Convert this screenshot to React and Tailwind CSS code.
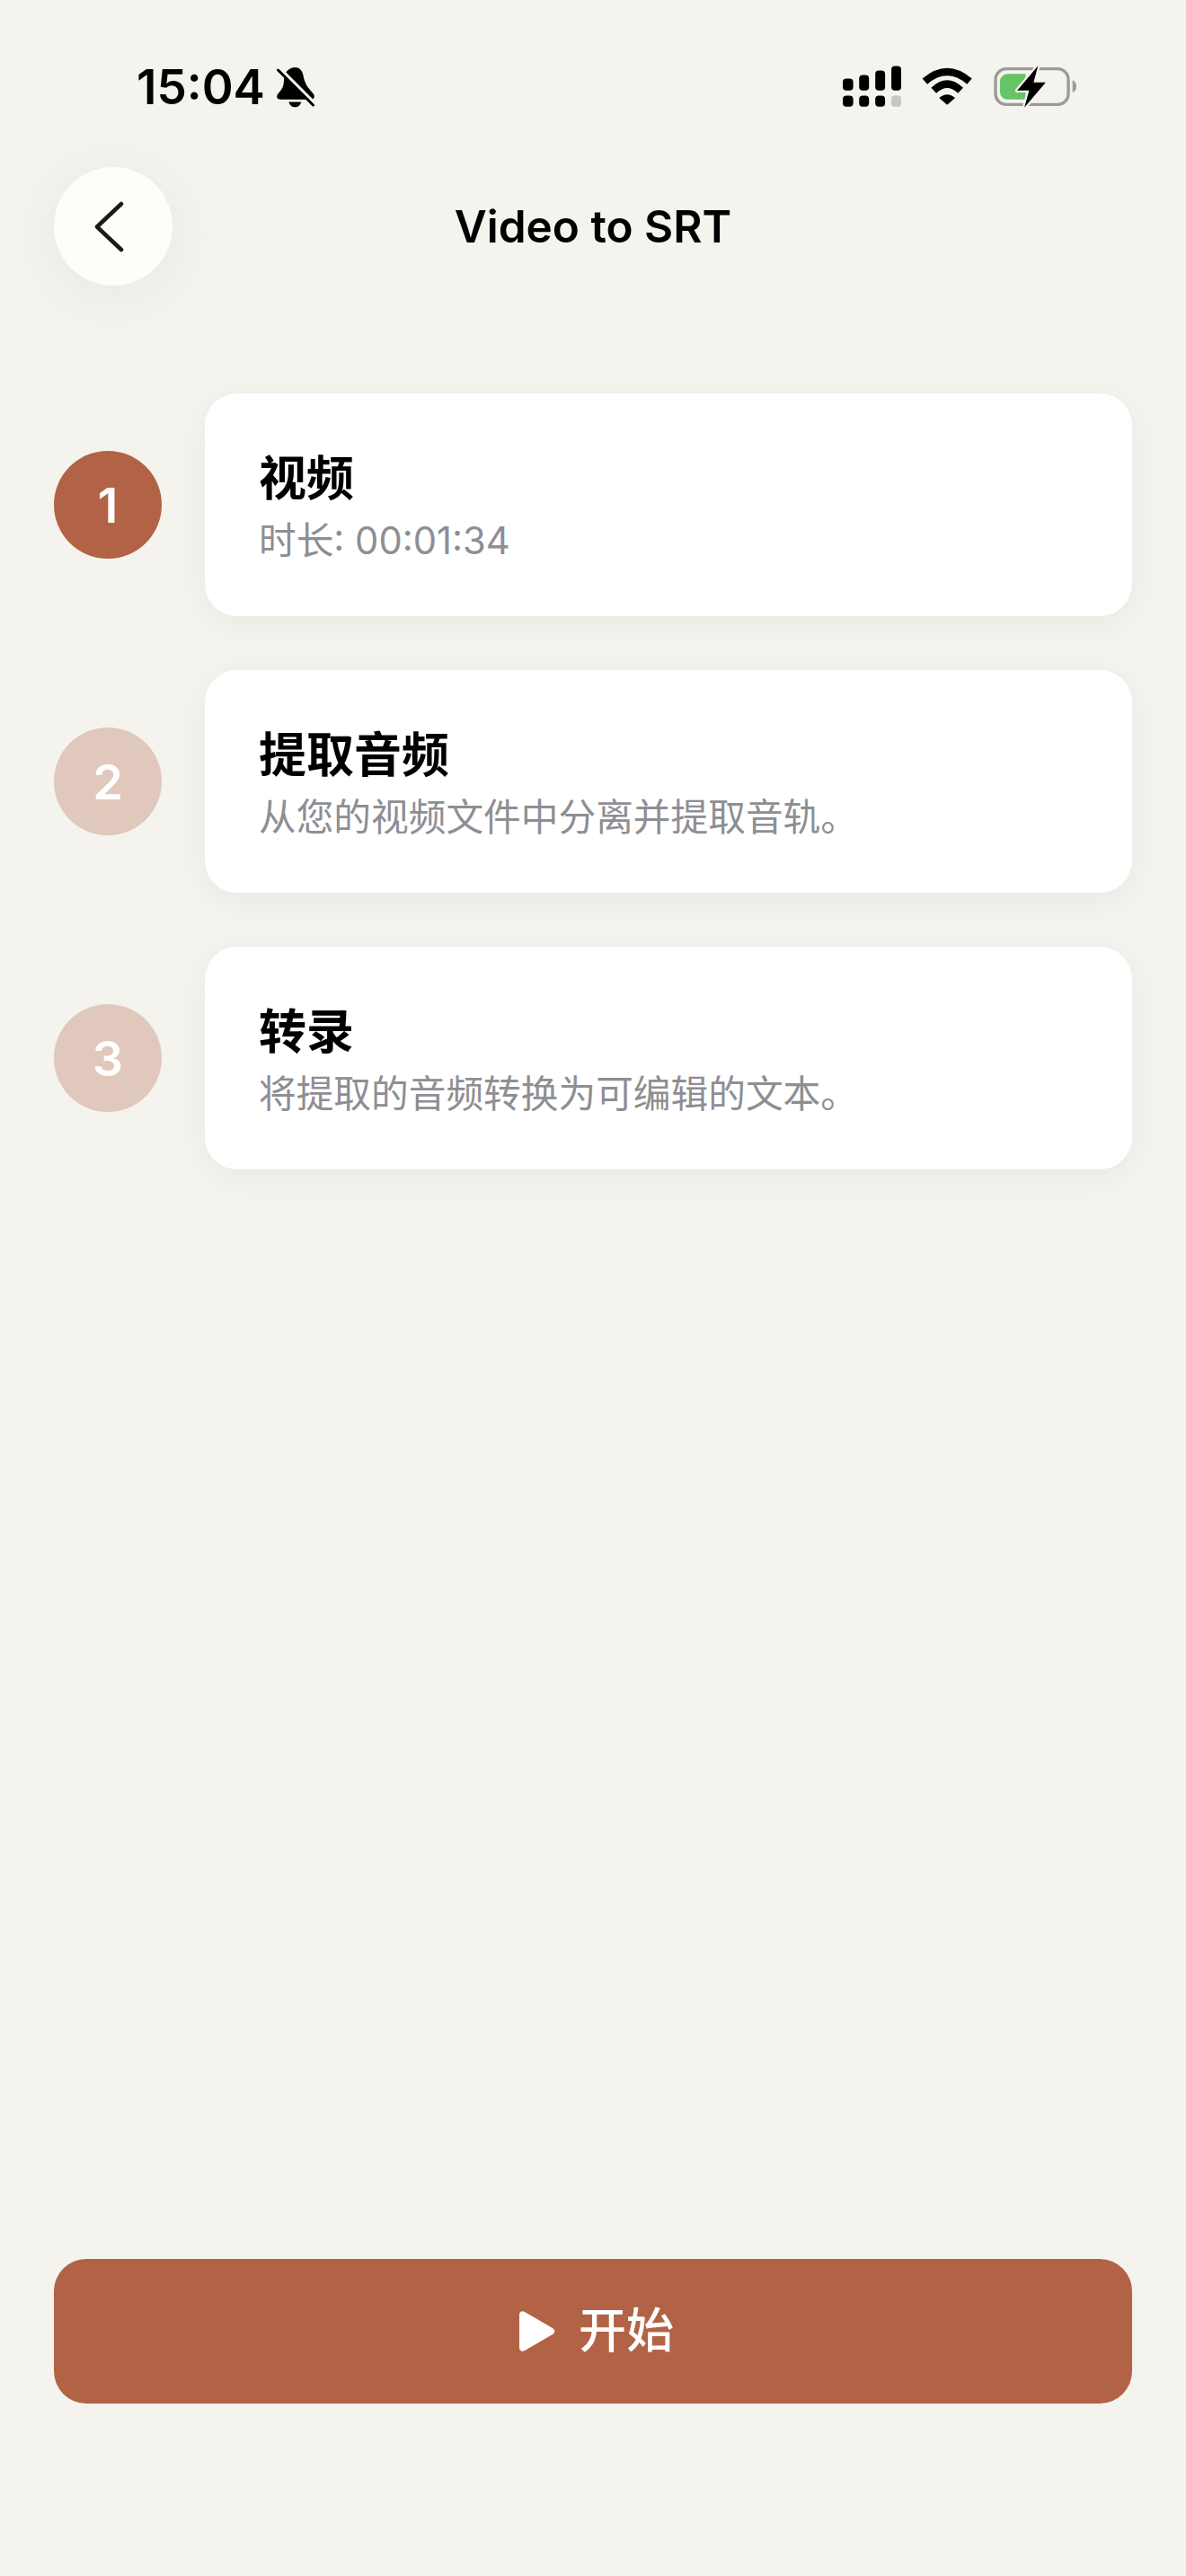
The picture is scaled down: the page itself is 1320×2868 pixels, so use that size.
const cjk = "font-['Inter','Noto_Sans_CJK_SC',sans-serif]";

const steps = [
  { n: 1, title: "视频", desc: "时长: 00:01:34", active: true },
  { n: 2, title: "提取音频", desc: "从您的视频文件中分离并提取音轨。" },
  { n: 3, title: "转录", desc: "将提取的音频转换为可编辑的文本。" },
];

const SignalIcon = () => (
  <svg width="65" height="47" viewBox="110 70 196 140">
    <rect x="110" y="113" width="35" height="40" rx="12" fill="#000" />
    <rect x="165" y="101" width="33" height="52" rx="12" fill="#000" />
    <rect x="219" y="86" width="33" height="67" rx="12" fill="#000" />
    <rect x="273" y="71" width="33" height="82" rx="12" fill="#000" />
    <rect x="110" y="170" width="35" height="37" rx="12" fill="#000" />
    <rect x="165" y="170" width="33" height="37" rx="12" fill="#000" />
    <rect x="219" y="170" width="33" height="37" rx="12" fill="#000" />
    <rect x="273" y="170" width="33" height="37" rx="10" fill="#c6c6c2" />
  </svg>
);

const WifiIcon = () => (
  <svg width="57" height="47" viewBox="375 70 172 140">
    <path d="M385 122 Q460 58 535 122" fill="none" stroke="#000" strokeWidth="25" />
    <path d="M415 153 Q460 110 505 153" fill="none" stroke="#000" strokeWidth="25" />
    <path d="M433 178 Q460 155 487 178 L460 201 Z" fill="#000" />
  </svg>
);

const BatteryIcon = () => (
  <svg width="92" height="47" viewBox="615 70 278 140" className="overflow-visible">
    <rect x="621" y="80" width="245" height="120" rx="36" fill="none" stroke="#9a9a96" strokeWidth="10" />
    <path d="M722 97 H662 a26 26 0 0 0 -26 26 v34 a26 26 0 0 0 26 26 H722 Z" fill="#65c466" />
    <path d="M880 118 q13 6 13 21 t-13 21 Z" fill="#9a9a96" />
    <path d="M764 70 L694 153 H734 L718 210 L790 126 H749 Z" fill="#000" stroke="#f4f3ee" strokeWidth="14" paintOrder="stroke" strokeLinejoin="round" />
  </svg>
);

const BellOffIcon = () => (
  <svg width="45" height="46" viewBox="555 73 135 139">
    <path d="M622 76 c14 0 24 10 27 24 c4 20 8 34 24 52 c10 11 14 16 14 22 c0 6 -5 10 -12 10 H575 c-9 0 -14 -4 -14 -10 c0 -8 8 -14 14 -22 c6 -8 8 -16 9 -24 l2 -22 c2 -16 20 -30 36 -30 Z" fill="#000" />
    <path d="M601 192 h42 c-3 11 -11 18 -21 18 s-18 -7 -21 -18 Z" fill="#000" />
    <path d="M574 82 L690 198" stroke="#f4f3ee" strokeWidth="10" />
    <path d="M565 85 L683 203" stroke="#000" strokeWidth="9" strokeLinecap="round" />
  </svg>
);

export default function App() {
  return (
    <div className={`flex h-[2868px] flex-col bg-[#f4f3ee] ${cjk}`}>
      <div className="flex h-[186px] items-start justify-between pl-[152px] pr-[122px] pt-[73px]">
        <div className="flex items-center gap-[11px]">
          <span className="text-[53px] leading-[48px] font-semibold text-black">15:04</span>
          <BellOffIcon />
        </div>
        <div className="flex items-center gap-[23px]">
          <SignalIcon />
          <WifiIcon />
          <BatteryIcon />
        </div>
      </div>

      <div className="flex h-[132px] items-center px-[60px]">
        <button className="flex size-[132px] shrink-0 items-center justify-center rounded-full bg-[#fefdf9] shadow-[0_10px_80px_rgba(0,0,0,0.06)]">
          <svg width="33" height="57" viewBox="0 0 33 57" className="mr-[9px]">
            <path d="M30 3 L3 28.5 L30 54" fill="none" stroke="#1a1a18" strokeWidth="4.5" strokeLinecap="round" strokeLinejoin="round" />
          </svg>
        </button>
        <div className="flex-1 text-center text-[49.5px] font-semibold text-black">Video to SRT</div>
        <div className="w-[132px] shrink-0" />
      </div>

      <div className="mt-[120px] flex flex-col gap-[60px] px-[60px]">
        {steps.map((s) => (
          <div key={s.n} className="flex items-center gap-[48px]">
            <div
              className={`flex size-[120px] shrink-0 items-center justify-center rounded-full text-[54px] font-semibold text-white ${
                s.active ? "bg-[#b26345]" : "bg-[#e0c8bc]"
              }`}
            >
              {s.n}
            </div>
            <div className="flex h-[248px] flex-1 flex-col justify-center rounded-[36px] bg-white pl-[60px] shadow-[0_8px_40px_rgba(0,0,0,0.05)]">
              <div className="text-[53px] leading-[80px] font-bold text-black">{s.title}</div>
              <div className="text-[41.7px] leading-[58px] text-[#8e8e93]">{s.desc}</div>
            </div>
          </div>
        ))}
      </div>

      <button className="mx-[60px] mt-auto mb-[192px] flex h-[161px] items-center justify-center gap-[26px] rounded-[36px] bg-[#b26345] pl-[8px] text-white">
        <svg width="40" height="45" viewBox="0 0 40 45">
          <path d="M0 4 C0 1 3 -1 6 1 L37 19 C40 21 40 24 37 26 L6 44 C3 46 0 44 0 41 Z" fill="#fff" />
        </svg>
        <span className="text-[53px] font-medium">开始</span>
      </button>
    </div>
  );
}
